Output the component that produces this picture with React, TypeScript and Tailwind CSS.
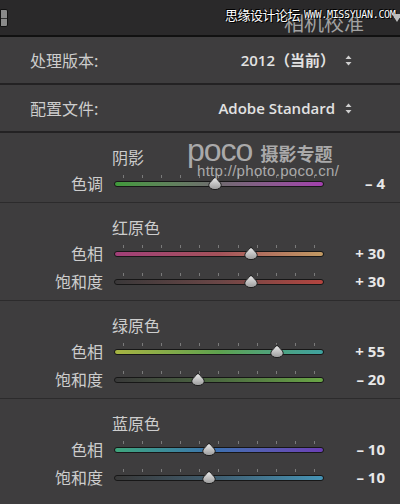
import React from "react";

type SliderProps = {
  label: string;
  value: string;
  amount: number;
  track: string;
};

const ticks = [0, 1, 2, 3, 4, 5, 6, 7, 8, 9, 10];

const Thumb = () => (
  <svg width="14" height="14" viewBox="0 0 14 14">
    <defs>
      <linearGradient id="thumbFill" x1="0" y1="0" x2="0" y2="1">
        <stop offset="0" stopColor="#f0f0f0" />
        <stop offset="1" stopColor="#9a9a9a" />
      </linearGradient>
    </defs>
    <path
      d="M7 0.8 C8.6 4 13.2 6 13.2 9.4 A6.2 4.2 0 0 1 0.8 9.4 C0.8 6 5.4 4 7 0.8 Z"
      fill="url(#thumbFill)"
      stroke="#1d1d1d"
      strokeWidth="1"
    />
  </svg>
);

const Slider = ({ label, value, amount, track }: SliderProps) => {
  // track is 210px wide, -100..100 maps onto it
  const left = 105 + (amount / 100) * 105;
  return (
    <div className="flex items-center h-7">
      <div className="w-[103px] text-right text-[16px] text-[#cdcdcd]">{label}</div>
      <div className="relative ml-[11px] w-[210px] h-full">
        <div className="absolute left-[9px] right-[9px] top-[6px] flex justify-between">
          {ticks.map((t) => (
            <span key={t} className="block w-px h-[3px] bg-[#7a7a7a]" />
          ))}
        </div>
        <div
          className={`absolute left-0 right-0 top-[12px] h-[6px] rounded-full border border-[#171717] ${track}`}
        />
        <div className="absolute top-[7px]" style={{ left: left - 7 }}>
          <Thumb />
        </div>
      </div>
      <div className="flex-1 text-right pr-[15px] text-[15px] font-bold text-[#e8e8e8] font-['Open_Sans',sans-serif]">
        {value}
      </div>
    </div>
  );
};

type Section = { title: string; sliders: SliderProps[] };

const sections: Section[] = [
  {
    title: "阴影",
    sliders: [
      {
        label: "色调",
        value: "– 4",
        amount: -4,
        track: "bg-linear-to-r from-[#3f9a3a] via-[#6f6a6f] to-[#a33fae]",
      },
    ],
  },
  {
    title: "红原色",
    sliders: [
      {
        label: "色相",
        value: "+ 30",
        amount: 30,
        track: "bg-linear-to-r from-[#a13f78] via-[#a4525a] to-[#c29a63]",
      },
      {
        label: "饱和度",
        value: "+ 30",
        amount: 30,
        track: "bg-linear-to-r from-[#3a3839] via-[#6a4646] to-[#b4443f]",
      },
    ],
  },
  {
    title: "绿原色",
    sliders: [
      {
        label: "色相",
        value: "+ 55",
        amount: 55,
        track: "bg-linear-to-r from-[#a7b442] via-[#5ea24e] to-[#3fa29f]",
      },
      {
        label: "饱和度",
        value: "– 20",
        amount: -20,
        track: "bg-linear-to-r from-[#393939] via-[#4c6a40] to-[#6aa646]",
      },
    ],
  },
  {
    title: "蓝原色",
    sliders: [
      {
        label: "色相",
        value: "– 10",
        amount: -10,
        track: "bg-linear-to-r from-[#3fa67c] via-[#3e6fb0] to-[#6a3fb5]",
      },
      {
        label: "饱和度",
        value: "– 10",
        amount: -10,
        track: "bg-linear-to-r from-[#393939] via-[#3f5f72] to-[#4594b6]",
      },
    ],
  },
];

const UpDown = () => (
  <svg width="7" height="11" viewBox="0 0 7 11" className="ml-[10px]">
    <path d="M3.5 0.5 L6.5 4 L0.5 4 Z" fill="#cfcfcf" />
    <path d="M3.5 10.5 L6.5 7 L0.5 7 Z" fill="#cfcfcf" />
  </svg>
);

const App = () => {
  return (
    <div className="w-[400px] h-[504px] overflow-hidden bg-[#3e3d3e] font-['Noto_Sans_CJK_SC',sans-serif] relative">
      {/* header */}
      <div className="relative h-[37px] bg-[#2a292a] border-b-2 border-[#111]">
        <div className="absolute left-0 top-[9px] w-[8px] h-[18px] border border-[#111] bg-[#8a8a8a] rounded-r-[2px] flex items-center">
          <div className="w-full h-px bg-[#333]" />
        </div>
        <div className="absolute left-[284px] top-[10px] text-[20px] leading-[26px] text-[#a2a2a2]">
          相机校准
        </div>
        <div className="absolute left-[225px] top-[6px] flex items-center gap-[4px] text-white [text-shadow:0_0_1px_#000,1px_1px_0_#000,-1px_-1px_0_#000]">
          <span className="text-[13px] leading-[18px] tracking-[-0.5px]">思缘设计论坛</span>
          <span className="text-[10px] leading-[18px] font-['DejaVu_Sans_Mono',monospace] tracking-[-0.3px]">
            WWW.MISSYUAN.COM
          </span>
        </div>
        <div className="absolute left-[392px] top-[14px] w-0 h-0 border-l-[5px] border-r-[5px] border-t-[8px] border-l-transparent border-r-transparent border-t-[#bdbdbd]" />
      </div>

      {/* process / profile */}
      <div className="flex items-center h-[48px] pl-[30px] pr-[48px] border-b-2 border-[#232223] text-[16px] text-[#cdcdcd]">
        <span className="flex-1">处理版本:</span>
        <span className="text-[15px] font-semibold text-[#e2e2e2]">
          <span className="font-['Open_Sans',sans-serif]">2012</span>（当前）
        </span>
        <UpDown />
      </div>
      <div className="flex items-center h-[48px] pl-[30px] pr-[48px] border-b-2 border-[#232223] text-[16px] text-[#cdcdcd]">
        <span className="flex-1">配置文件:</span>
        <span className="text-[15px] font-semibold text-[#e2e2e2] font-['Open_Sans',sans-serif]">
          Adobe Standard
        </span>
        <UpDown />
      </div>

      {sections.map((s, i) => (
        <div
          key={s.title}
          className={`pt-[12px] pb-[5px] ${i < sections.length - 1 ? "border-b border-[#2c2b2c]" : ""}`}
        >
          <div className="h-6 pl-[112px] text-[16px] leading-6 text-[#cdcdcd]">{s.title}</div>
          {s.sliders.map((sl) => (
            <Slider key={sl.label} {...sl} />
          ))}
        </div>
      ))}

      {/* poco watermark */}
      <div className="absolute left-[187px] top-[136px] w-[150px] flex flex-col text-[#d8d8d8] opacity-70 pointer-events-none">
        <div className="flex items-end gap-[8px]">
          <span className="text-[32px] leading-[28px] font-['Liberation_Sans',sans-serif] tracking-[-1px]">
            poco
          </span>
          <span className="text-[18px] leading-[22px] font-bold">摄影专题</span>
        </div>
        <span className="ml-[10px] whitespace-nowrap text-[15px] leading-[13px] tracking-[0.3px] font-['Liberation_Sans',sans-serif]">
          http://photo.poco.cn/
        </span>
      </div>
    </div>
  );
};

export default App;
